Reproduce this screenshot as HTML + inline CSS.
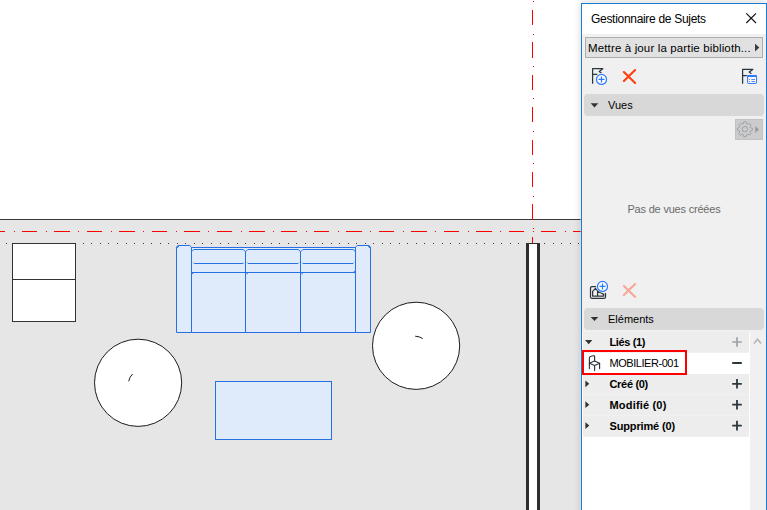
<!DOCTYPE html>
<html lang="fr">
<head>
<meta charset="utf-8">
<title>Gestionnaire de Sujets</title>
<style>
html,body{margin:0;padding:0;}
body{width:767px;height:510px;overflow:hidden;position:relative;background:#fff;
  font-family:"Liberation Sans",sans-serif;font-size:11px;color:#000;}
#canvas{position:absolute;left:0;top:0;width:767px;height:510px;}
#panel{position:absolute;left:581px;top:3px;width:184px;height:520px;
  border:1px solid #1a7bd4;background:#f0f0f0;
  box-shadow:0 0 0 1px rgba(255,246,236,0.35), 0 0 9px rgba(0,0,0,0.13), 0 -2px 5px rgba(0,0,0,0.06);}
#panel *{box-sizing:border-box;}
.abs{position:absolute;}
#titlebar{left:0;top:0;width:184px;height:30px;background:#fff;}
#title{left:9px;top:5px;height:20px;line-height:20px;font-size:12px;white-space:nowrap;letter-spacing:-0.3px;color:#000;}
#btn{left:3px;top:33px;width:178px;height:21px;border:1px solid #adadad;background:#e1e1e1;}
#btn span{position:absolute;left:2px;top:1px;height:19px;line-height:19px;font-size:11.5px;white-space:nowrap;letter-spacing:0.14px;}
.hdr{left:2px;width:180px;height:22px;background:#d8d8d8;border-radius:4px;}
.hdr span{position:absolute;left:24px;top:0;height:22px;line-height:22px;font-size:11px;white-space:nowrap;}
#gear{left:153px;top:115px;width:28px;height:21px;background:#cccccc;border:1px solid #c2c2c2;}
#novues{left:0;top:195px;width:184px;text-align:center;font-size:11px;color:#6a6a6a;line-height:20px;height:20px;white-space:nowrap;letter-spacing:-0.2px;}
#list{left:0;top:328px;width:168px;height:190px;background:#fff;}
.row{position:absolute;left:1px;width:166px;height:21px;background:#ededed;border-bottom:1px solid #f1f1f1;}
.row .t{position:absolute;left:26.5px;top:0;height:20px;line-height:20px;font-size:11px;font-weight:bold;white-space:nowrap;}
.row.item{background:#fff;border-bottom:none;}
.row.item .t{font-weight:normal;}
#sb{left:168px;top:328px;width:16px;height:190px;background:#f0f0f0;}
#redbox{left:0px;top:346px;width:105px;height:25px;border:2px solid #f00;}
</style>
</head>
<body>
<svg id="canvas" width="767" height="510" viewBox="0 0 767 510" shape-rendering="crispEdges">
  <rect x="0" y="220" width="767" height="290" fill="#e6e6e6"/>
  <rect x="0" y="219" width="767" height="1" fill="#3a3a3a"/>
  <!-- red reference lines -->
  <line x1="0" y1="231.5" x2="600" y2="231.5" stroke="#ff0000" stroke-width="1" stroke-dasharray="15.5 8.6 1 7.34" stroke-dashoffset="10.5"/>
  <line x1="532.5" y1="0" x2="532.5" y2="243" stroke="#ff0000" stroke-width="1" stroke-dasharray="15.2 17.2" stroke-dashoffset="22.3"/>
  <line x1="533.5" y1="0" x2="533.5" y2="230" stroke="#ff0000" stroke-width="1" stroke-dasharray="1 31.4" stroke-dashoffset="31.1"/>
  <!-- dotted line -->
  <line x1="6" y1="243.5" x2="600" y2="243.5" stroke="#3c3c3c" stroke-width="1" stroke-dasharray="1 7.54"/>
  <!-- cabinet -->
  <rect x="12.5" y="243.5" width="63" height="78" fill="#fff" stroke="#333" stroke-width="1"/>
  <line x1="12" y1="279.5" x2="76" y2="279.5" stroke="#333" stroke-width="1"/>
  <!-- wall -->
  <rect x="526" y="243" width="14" height="270" fill="#2e2e2e"/>
  <rect x="529" y="244" width="8" height="270" fill="#fff"/>
  <!-- sofa -->
  <g fill="#dfeafa" stroke="#2571e2" stroke-width="1" shape-rendering="auto">
    <rect x="191.5" y="247.5" width="164" height="85"/>
    <path d="M176.5 332.5 V247.3 L178.3 245.5 H189.8 L191.5 247.2 V332.5 Z"/>
    <path d="M355.5 332.5 V247.2 L357.2 245.5 H368.7 L370.5 247.3 V332.5 Z"/>
    <path d="M176.8 247.6 L178.6 245.8 M370.2 247.6 L368.4 245.8" stroke-width="1.6" fill="none"/>
    <path d="M192 251.3 L193.8 249.5 H243.2 L245.5 251.8 L247.8 249.5 H298.2 L300.5 251.8 L302.8 249.5 H353.2 L355 251.3" fill="none"/>
    <path d="M193.3 262.6 L194.2 263.5 H243 L243.9 262.6 M247.1 262.6 L248 263.5 H298 L298.9 262.6 M302.1 262.6 L303 263.5 H353 L353.9 262.6" fill="none"/>
    <path d="M191.5 272.5 H355.5" fill="none"/>
    <path d="M245.5 251.5 V332.5 M300.5 251.5 V332.5" fill="none"/>
    <path d="M245.5 272.5 h1.6 v1.8 M300.5 272.5 h1.6 v1.8 M191.5 272.5 h1.2 v1.6 M355.5 272.5 h-1.2 v-1.6" fill="none"/>
  </g>
  <!-- table -->
  <rect x="215.5" y="381.5" width="116" height="58" fill="#dfeafa" stroke="#2571e2" stroke-width="1"/>
  <!-- round chairs -->
  <g fill="#fff" stroke="#1c1c1c" stroke-width="1" shape-rendering="auto">
    <circle cx="138.1" cy="382.8" r="43.6"/>
    <circle cx="416.1" cy="345.8" r="43.6"/>
    <path d="M132.6 374 Q129.4 377 128.7 381.3" fill="none"/>
    <path d="M415.2 336.2 Q419.5 336.3 422.8 338.6" fill="none"/>
  </g>
</svg>

<div id="panel">
  <div id="titlebar" class="abs"></div>
  <div id="title" class="abs">Gestionnaire de Sujets</div>
  <div id="btn" class="abs"><span>Mettre à jour la partie biblioth...</span></div>
  <div class="abs hdr" style="top:90px"><span>Vues</span></div>
  <div id="gear" class="abs"></div>
  <div id="novues" class="abs">Pas de vues créées</div>
  <div class="abs hdr" style="top:304px"><span>Eléments</span></div>
  <div id="list" class="abs">
    <div class="row" style="top:0px"><span class="t" style="letter-spacing:-0.36px">Liés (1)</span></div>
    <div class="row item" style="top:21px"><span class="t" style="letter-spacing:-0.45px">MOBILIER-001</span></div>
    <div class="row" style="top:42px"><span class="t" style="letter-spacing:-0.32px">Créé (0)</span></div>
    <div class="row" style="top:63px"><span class="t" style="letter-spacing:0.18px">Modifié (0)</span></div>
    <div class="row" style="top:84px"><span class="t" style="letter-spacing:-0.15px">Supprimé (0)</span></div>
  </div>
  <div id="sb" class="abs"></div>
  <div id="redbox" class="abs"></div>
</div>

<svg id="icons" width="767" height="510" viewBox="0 0 767 510" style="position:absolute;left:0;top:0;pointer-events:none">
  <!-- close -->
  <path d="M746.3 13.3 L756 23 M756 13.3 L746.3 23" stroke="#111" stroke-width="1.15" fill="none"/>
  <!-- button arrow -->
  <path d="M755 43.8 L759.3 47.6 L755 51.4 Z" fill="#3a3a3a"/>
  <!-- flag + plus -->
  <g fill="none" stroke="#2b363d" stroke-width="1.25" stroke-linejoin="round">
    <path d="M592.6 83.8 V68.7 H602.8 L599.2 71.4 L601.6 73.2 M592.6 74.3 H597.5"/>
  </g>
  <circle cx="601.5" cy="79.4" r="6.3" fill="#f6f3ee"/>
  <circle cx="601.5" cy="79.4" r="5.05" fill="#fdfbf8" stroke="#2b7bff" stroke-width="1.2"/>
  <path d="M598.5 79.4 H604.5 M601.5 76.4 V82.4" stroke="#2b7bff" stroke-width="1.2" fill="none"/>
  <!-- red X -->
  <path d="M623.9 72.1 L635.1 83 M635.1 70 L623.9 80.9" stroke="#ff3d0d" stroke-width="2.1" stroke-linecap="round" fill="none"/>
  <!-- flag + list -->
  <g fill="none" stroke="#2b363d" stroke-width="1.25" stroke-linejoin="round">
    <path d="M742.6 83.8 V69.4 H752.8 L749.2 72.1 L751.4 73.8 M742.6 75.6 H747"/>
  </g>
  <rect x="746.6" y="74.4" width="10.9" height="10" rx="2" fill="#f6f3ee"/>
  <rect x="747.55" y="75.45" width="9.0" height="8.0" rx="1.4" fill="#fdf6ee" stroke="#2b7bff" stroke-width="1.05"/>
  <rect x="747.2" y="75" width="9.7" height="2.0" rx="1" fill="#2b7bff"/>
  <path d="M749.1 79.5 H750 M751.4 79.5 H755 M749.1 81.5 H750 M751.4 81.5 H755" stroke="#2b7bff" stroke-width="0.85" fill="none"/>
  <!-- header triangles -->
  <path d="M590.7 103.2 H598.3 L594.5 107.4 Z" fill="#333"/>
  <path d="M590.7 316.9 H598.3 L594.5 321.1 Z" fill="#333"/>
  <!-- gear -->
  <g fill="none" stroke="#9aa3a8" stroke-width="1" transform="translate(735.85,120.1) scale(0.95)">
    <circle cx="9.5" cy="9.5" r="2.8"/>
    <path d="M8.2 1.8 H10.8 L11.2 3.8 L12.6 4.4 L14.3 3.3 L16 5.1 L14.9 6.7 L15.5 8.1 L17.4 8.4 V10.8 L15.5 11.2 L14.9 12.6 L16 14.2 L14.3 15.9 L12.6 14.8 L11.2 15.4 L10.8 17.3 H8.2 L7.8 15.4 L6.4 14.8 L4.8 15.9 L3 14.2 L4.1 12.6 L3.5 11.2 L1.6 10.8 V8.4 L3.5 8.1 L4.1 6.7 L3 5.1 L4.8 3.3 L6.4 4.4 L7.8 3.8 Z"/>
  </g>
  <path d="M755.1 126 L759.2 129.5 L755.1 133 Z" fill="#9d9d9d"/>
  <!-- view + plus -->
  <g fill="none" stroke="#2b363d" stroke-width="1.25" stroke-linejoin="round" stroke-linecap="round">
    <path d="M596.5 286.5 H592 Q590.5 286.5 590.5 288 V296.9 Q590.5 298.4 592 298.4 H604 Q605.5 298.4 605.5 296.9 V293.3"/>
    <path d="M592.6 296 V291.4 L595.5 288.4 L597.6 290.9 L603.7 294.4 V296 Z M597.6 290.9 V296"/>
  </g>
  <circle cx="602.5" cy="286.4" r="6.3" fill="#f6f3ee"/>
  <circle cx="602.5" cy="286.4" r="5.05" fill="#fdfbf8" stroke="#2b7bff" stroke-width="1.2"/>
  <path d="M599.5 286.4 H605.5 M602.5 283.4 V289.4" stroke="#2b7bff" stroke-width="1.2" fill="none"/>
  <!-- disabled X -->
  <path d="M623.9 286.1 L635.1 297 M635.1 284 L623.9 294.9" stroke="#f7a796" stroke-width="2.1" stroke-linecap="round" fill="none"/>
  <!-- list: Liés row -->
  <path d="M585 340 H592.4 L588.7 344.3 Z" fill="#333"/>
  <path d="M737 337.3 V346.7 M732.3 342 H741.7" stroke="#9aa1a6" stroke-width="1.7" fill="none"/>
  <path d="M754 343.4 L757.5 339.2 L761 343.4" stroke="#b4b4b4" stroke-width="1.5" fill="none"/>
  <!-- chair -->
  <g fill="none" stroke="#2b363d" stroke-width="1.15" stroke-linejoin="round" stroke-linecap="round">
    <path d="M589.4 368.6 V358.2 Q589.4 356.6 591 356.3 L593.6 355.7 Q594.6 355.6 594.6 356.8 V361"/>
    <path d="M589.4 363.2 L594.6 361 L599.6 363.3 L594.6 365.5 Z"/>
    <path d="M599.6 363.3 V368.6 M594.6 365.5 V370.6"/>
  </g>
  <path d="M732.2 363 H741.8" stroke="#2b363d" stroke-width="2" fill="none"/>
  <!-- collapsed rows -->
  <g fill="#333">
    <path d="M585.4 380.4 L589.3 383.8 L585.4 387.2 Z"/>
    <path d="M585.4 401.3 L589.3 404.7 L585.4 408.1 Z"/>
    <path d="M585.4 422.2 L589.3 425.6 L585.4 429 Z"/>
  </g>
  <g stroke="#2b363d" stroke-width="1.8" fill="none">
    <path d="M737 379 V388.6 M732.2 383.8 H741.8"/>
    <path d="M737 399.9 V409.5 M732.2 404.7 H741.8"/>
    <path d="M737 420.8 V430.4 M732.2 425.6 H741.8"/>
  </g>
</svg>
</body>
</html>
